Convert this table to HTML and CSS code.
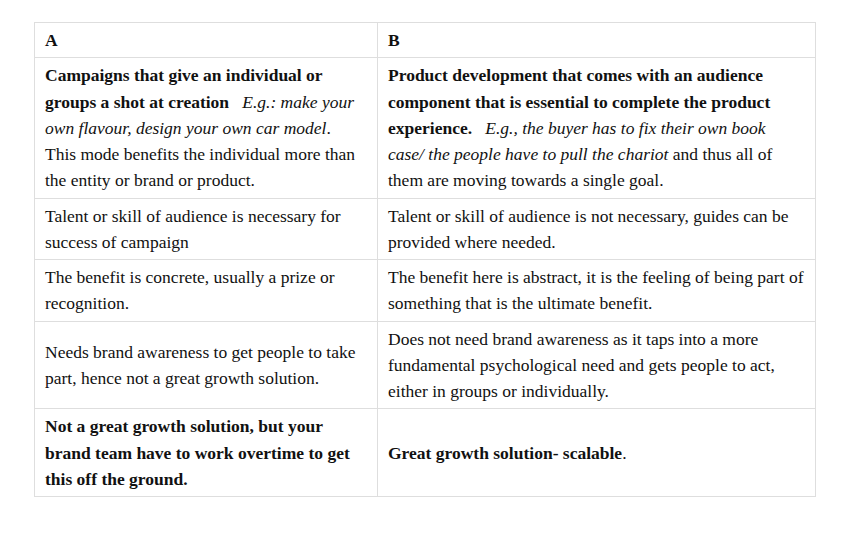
FILE: index.html
```html
<!DOCTYPE html>
<html>
<head>
<meta charset="utf-8">
<link rel="stylesheet" href="styles.css">
</head>
<body>
<div class="page">
<table class="cmp">
  <colgroup><col class="col-a"><col class="col-b"></colgroup>
  <tr>
    <td><b>A</b></td>
    <td><b>B</b></td>
  </tr>
  <tr>
    <td><b>Campaigns that give an individual or groups a shot at creation</b>&nbsp;&nbsp;&nbsp;<i>E.g.: make your own flavour, design your own car model</i>. This mode benefits the individual more than the entity or brand or product.</td>
    <td><b>Product development that comes with an audience component that is essential to complete the product experience.</b>&nbsp;&nbsp;&nbsp;<i>E.g., the buyer has to fix their own book case/ the people have to pull the chariot</i> and thus all of them are moving towards a single goal.</td>
  </tr>
  <tr>
    <td>Talent or skill of audience is necessary for success of campaign</td>
    <td>Talent or skill of audience is not necessary, guides can be provided where needed.</td>
  </tr>
  <tr>
    <td>The benefit is concrete, usually a prize or recognition.</td>
    <td>The benefit here is abstract, it is the feeling of being part of something that is the ultimate benefit.</td>
  </tr>
  <tr>
    <td>Needs brand awareness to get people to take part, hence not a great growth solution.</td>
    <td>Does not need brand awareness as it taps into a more fundamental psychological need and gets people to act, either in groups or individually.</td>
  </tr>
  <tr>
    <td><b>Not a great growth solution, but your brand team have to work overtime to get this off the ground.</b></td>
    <td><b>Great growth solution- scalable</b>.</td>
  </tr>
</table>
</div>
</body>
</html>
```
FILE: styles.css
```css
html, body {
  margin: 0;
  padding: 0;
  background: #ffffff;
}
.page {
  padding: 22px 0 0 34px;
}
.cmp {
  border-collapse: collapse;
  table-layout: fixed;
  width: 781px;
  font-family: "Liberation Serif", "Times New Roman", serif;
  font-size: 17.5px;
  line-height: 26.25px;
  color: #111111;
}
.col-a { width: 343px; }
.col-b { width: 438px; }
.cmp td {
  border: 1px solid #dedede;
  padding: 4px 11px 4px 10px;
  vertical-align: middle;
}
.cmp td:first-child {
  padding-right: 15px;
}
.cmp b { font-weight: bold; }
```
